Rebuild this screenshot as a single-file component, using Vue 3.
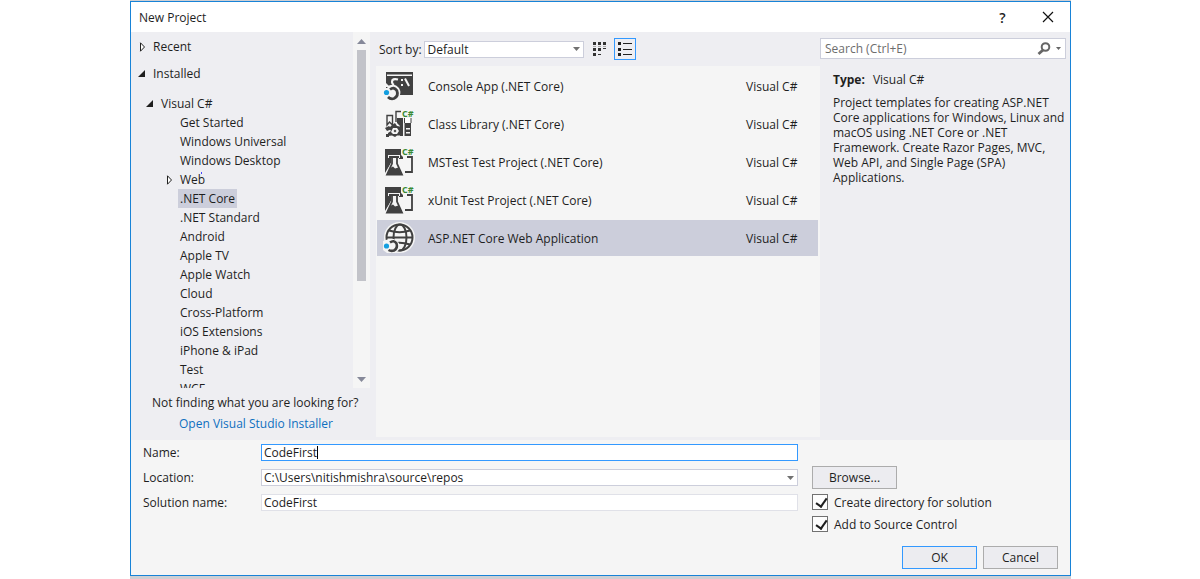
<script setup>
import { ref } from 'vue'

const languages = [
  { name: 'Get Started' },
  { name: 'Windows Universal' },
  { name: 'Windows Desktop' },
  { name: 'Web', closed: true },
  { name: '.NET Core', selected: true },
  { name: '.NET Standard' },
  { name: 'Android' },
  { name: 'Apple TV' },
  { name: 'Apple Watch' },
  { name: 'Cloud' },
  { name: 'Cross-Platform' },
  { name: 'iOS Extensions' },
  { name: 'iPhone & iPad' },
  { name: 'Test' },
  { name: 'WCF' },
]
const templates = [
  { name: 'Console App (.NET Core)', icon: 'console' },
  { name: 'Class Library (.NET Core)', icon: 'library' },
  { name: 'MSTest Test Project (.NET Core)', icon: 'test' },
  { name: 'xUnit Test Project (.NET Core)', icon: 'test' },
  { name: 'ASP.NET Core Web Application', icon: 'web' },
]
const selected = ref(4)
const name = ref('CodeFirst')
const solution = ref('CodeFirst')
const search = ref('')
const createDir = ref(true)
const sourceControl = ref(true)
</script>

<template>
  <div class="desktop">
    <main class="dialog">
      <header class="titlebar">
        <h1>New Project</h1>
        <button class="caption" aria-label="Help">?</button>
        <button class="caption" aria-label="Close">
          <svg width="12" height="12" viewBox="0 0 12 12"><path d="M1 1l10 10M11 1L1 11" stroke="#111" stroke-width="1.2" /></svg>
        </button>
      </header>

      <div class="body">
        <nav class="side">
          <div class="tree-area">
            <div class="tree">
              <div class="node top">
                <svg class="arrow" width="8" height="10" viewBox="0 0 8 10"><path d="M2.500 0.800L6.500 5L2.500 9.200Z" fill="#fff" stroke="#222" /></svg>Recent
              </div>
              <div class="node top">
                <svg class="arrow" width="8" height="10" viewBox="0 0 8 10"><path d="M7 1V8H0Z" fill="#1e1e1e" /></svg>Installed
              </div>
              <div class="node lang">
                <svg class="arrow" width="8" height="10" viewBox="0 0 8 10"><path d="M7 1V8H0Z" fill="#1e1e1e" /></svg>Visual C#
              </div>
              <div v-for="l in languages" :key="l.name" class="node leaf">
                <svg class="arrow" width="8" height="10" viewBox="0 0 8 10"><path v-if="l.closed" d="M2.500 0.800L6.500 5L2.500 9.200Z" fill="#fff" stroke="#222" /></svg>
                <span class="label" :class="{ on: l.selected, dotted: l.closed }">{{ l.name }}</span>
              </div>
            </div>
            <div class="scrollbar">
              <svg width="9" height="5" viewBox="0 0 9 5"><path d="M0 5L4.500 0L9 5Z" fill="#868999" /></svg>
              <div class="track"><div class="thumb"></div></div>
              <svg width="9" height="5" viewBox="0 0 9 5"><path d="M0 0L4.500 5L9 0Z" fill="#868999" /></svg>
            </div>
          </div>
          <p class="hint">Not finding what you are looking for?</p>
          <a class="installer" href="#">Open Visual Studio Installer</a>
        </nav>

        <section class="center">
          <div class="toolbar">
            <label for="sort">Sort by:</label>
            <div class="combo sort">
              <select id="sort"><option>Default</option></select>
              <svg width="7" height="4" viewBox="0 0 7 4"><path d="M0 0H7L3.500 4Z" fill="#717171" /></svg>
            </div>
            <button class="view" aria-label="Small icons">
              <svg width="14" height="14" viewBox="0 0 14 14" fill="#333"><path d="M0 0h3v3H0zM5 0h3v3H5zM10 0h3v3h-3zM0 6h3v3H0zM5 6h3v3H5zM10 6h3v1h-3zM0 11h3v3H0zM5 12h3v1H5z" /><path d="M0 4h3v1H0zM5 4h3v1H5zM10 4h3v1h-3z" fill="#aaa" /></svg>
            </button>
            <button class="view active" aria-label="List">
              <svg width="14" height="14" viewBox="0 0 14 14" fill="#222"><path d="M0 0h3v3H0zM0 6h3v3H0zM0 11h3v3H0zM5 1h9v1H5zM5 7h9v1H5zM5 12h9v1H5z" /></svg>
            </button>
          </div>
          <ul class="templates">
            <li v-for="(t, i) in templates" :key="t.name" :class="{ on: i === selected }" @click="selected = i">
              <svg v-if="t.icon === 'console'" class="icon" width="32" height="32" viewBox="0 0 32 32">
                <path d="M3 2H30V25H3Z" fill="#414141" />
                <path d="M4 4.500H29V6H4Z" fill="#f5f5f5" />
                <path d="M15 9.500Q9 8 9 12Q9 14 11 15" fill="none" stroke="#f5f5f5" stroke-width="2.200" />
                <path d="M18 9h2v2h-2zM18 14h2v2h-2z" fill="#f5f5f5" />
                <path d="M22 8.500L26 16" stroke="#f5f5f5" stroke-width="2" />
                <path d="M3 13L7 17H3ZM0 18H4L6 15.500Q12 13 16 18Q19 23 15.500 28L11 31H3L0 27Z" fill="#f5f5f5" />
                <path d="M7 19.500Q11 16.500 13.800 20.500Q16 26 11 28.500Q7.500 29.500 5 27" fill="none" stroke="#414141" stroke-width="2.800" />
                <circle cx="3.500" cy="22.500" r="2.600" fill="#149fe0" />
              </svg>
              <svg v-else-if="t.icon === 'library'" class="icon" width="32" height="32" viewBox="0 0 32 32">
                <path d="M4 17V7.500H9.500V17L6.500 14ZM13 14V3.500H18" fill="none" stroke="#414141" stroke-width="1.400" />
                <path d="M14 10H20V28H17V18L14 15ZM21.500 15H28V28H21.500Z" fill="#414141" />
                <path d="M21.500 10H28V15H21.500Z" fill="#fff" />
                <path d="M21.500 10V15M28 10V15" stroke="#414141" />
                <path d="M23 20H27V21.500H23ZM23 24H27V25.500H23Z" fill="#f5f5f5" />
                <path d="M9 17L12 15L14 18L17 18.500V21L19 23L17 25V27.500H14L12 29L9 27.500L5 28V25L8 23L6 20Z" fill="#414141" />
                <path d="M10 20L14 20L16 23L14 26H10L8 24Z" fill="#f5f5f5" />
                <path d="M12 21.500L13.500 23L12 24.500L10.500 23Z" fill="#414141" />
                <path d="M2 20L6 18L9 21L4 23ZM3 26H6V29H3Z" fill="#414141" />
                <text class="sharp" x="19" y="9">C#</text>
              </svg>
              <svg v-else-if="t.icon === 'test'" class="icon" width="32" height="32" viewBox="0 0 32 32">
                <path d="M2 3H18V9L20 11V13H2Z" fill="#414141" />
                <path d="M2 10H8V17L2 29Z" fill="#414141" />
                <path d="M24 11H29V26H22" fill="none" stroke="#414141" stroke-width="1.800" />
                <path d="M5 9H17V12H16V17L21.500 27V31H2V27L8 17V12H5Z" fill="#f5f5f5" />
                <path d="M6 11H16M9 11V17.500L4 28.500H19L14 17.500V11" fill="none" stroke="#414141" stroke-width="1.800" />
                <path d="M7 22L10 20.500L12 22.500L15.500 21.500L19 29H4Z" fill="#414141" />
                <text class="sharp" x="19" y="9">C#</text>
              </svg>
              <svg v-else class="icon" width="32" height="32" viewBox="0 0 32 32">
                <circle cx="16.500" cy="15.500" r="15.500" fill="#f5f5f5" />
                <g fill="none" stroke="#414141" stroke-width="2"><circle cx="16.500" cy="15.500" r="13" /><ellipse cx="17" cy="15.500" rx="6.500" ry="13" /><path d="M6 8.500Q16.500 12 27 8.500M3.500 15.500H29.500M6 22.500Q16.500 19 27 22.500" /></g>
                <path d="M0 19L6 17H11L16 21L16.500 27L13 31H4L0 28Z" fill="#f5f5f5" />
                <path d="M7 20.500Q11 17.500 13.500 21.500Q15 26.500 11 28.500Q8 29.500 5.500 28" fill="none" stroke="#414141" stroke-width="2.600" />
                <circle cx="3.500" cy="24" r="2.600" fill="#149fe0" />
              </svg>
              <span class="tname">{{ t.name }}</span>
              <span class="tlang">Visual C#</span>
            </li>
          </ul>
        </section>

        <aside class="details">
          <div class="search">
            <input v-model="search" aria-label="Search" placeholder="Search (Ctrl+E)" />
            <svg width="14" height="14" viewBox="0 0 14 14"><circle cx="8.500" cy="5" r="3.800" fill="none" stroke="#666" stroke-width="2" /><path d="M6 8L1.500 12" stroke="#666" stroke-width="2.800" /></svg>
            <svg width="5" height="3" viewBox="0 0 5 3"><path d="M0 0H5L2.500 3Z" fill="#666" /></svg>
          </div>
          <div class="info">
            <p><b>Type:</b>Visual C#</p>
            <p>Project templates for creating ASP.NET Core applications for Windows, Linux and macOS using .NET Core or .NET Framework. Create Razor Pages, MVC, Web API, and Single Page (SPA) Applications.</p>
          </div>
        </aside>
      </div>

      <form class="bottom" @submit.prevent>
        <div class="fields">
          <label for="name">Name:</label>
          <div class="field focus"><input id="name" v-model="name" class="grow" /><i class="caret"></i></div>
          <label for="location">Location:</label>
          <div class="combo">
            <select id="location"><option>C:\Users\nitishmishra\source\repos</option></select>
            <svg width="7" height="4" viewBox="0 0 7 4"><path d="M0 0H7L3.500 4Z" fill="#717171" /></svg>
          </div>
          <label for="solution">Solution name:</label>
          <div class="field quiet"><input id="solution" v-model="solution" /></div>
        </div>
        <div class="options">
          <button type="button" class="btn browse">Browse...</button>
          <label class="check"><input v-model="createDir" type="checkbox" />Create directory for solution</label>
          <label class="check"><input v-model="sourceControl" type="checkbox" />Add to Source Control</label>
          <div class="actions">
            <button class="btn primary">OK</button>
            <button type="button" class="btn">Cancel</button>
          </div>
        </div>
      </form>
    </main>
  </div>
</template>

<style>
body { background: #fff; }
</style>

<style scoped>
.desktop, .desktop * { box-sizing: border-box; }
.desktop {
  margin: 0 129px 0 130px;
  padding: 1px 0 3px;
  background: #cfcfd3;
  color: #1e1e1e;
  font: 12px/15px "Open Sans", "Noto Sans", sans-serif;
}
input, select, button { font: inherit; color: inherit; margin: 0; border: 0; background: none; padding: 0; outline: 0; }
svg { flex: none; }
p, h1, ul { margin: 0; padding: 0; }
.dialog { border: 1px solid #1883d7; background: #f5f5f5; }
.titlebar { display: flex; align-items: center; height: 30px; padding: 0 0 0 8px; background: #fff; }
h1 { flex: 1; font-size: 12px; font-weight: 400; }
.caption { width: 45px; height: 30px; display: flex; align-items: center; justify-content: center; font-size: 14px; font-weight: 600; }
.body { display: grid; grid-template-columns: 239px minmax(0, 1fr) 250px; height: 408px; background: #eeeef2; }

.tree-area { display: flex; height: 356px; overflow: hidden; }
.tree { flex: 1; padding-top: 1px; }
.node { display: flex; align-items: center; height: 19px; }
.arrow { margin-right: 7px; }
.top { height: 27px; padding-left: 7px; }
.lang { height: 19px; margin-top: 7px; padding-left: 15px; }
.leaf { padding-left: 34px; }
.leaf .arrow { margin-right: 5px; }
.label { position: relative; height: 19px; padding: 0 2px; line-height: 19px; }
.label.on { background: #cccedb; }
.dotted::after { content: ""; position: absolute; top: 2px; right: 5px; width: 1px; height: 2px; background: #4646ff; }
.scrollbar { display: flex; flex-direction: column; align-items: center; width: 17px; padding: 7px 0 6px; background: #f5f5f5; }
.track { flex: 1; width: 9px; padding: 6px 0; }
.thumb { height: 72%; background: #c2c3c9; }
.hint { padding: 7px 0 0 21px; }
.installer { display: block; margin: 6px 0 0 48px; color: #0e70c0; text-decoration: none; }

.center { padding-left: 6px; display: flex; flex-direction: column; }
.toolbar { display: flex; align-items: center; height: 34px; padding-left: 3px; }
.combo, .field { display: flex; align-items: center; height: 17px; border: 1px solid #cccedb; background: #fff; }
.combo select { flex: 1; min-width: 0; height: 15px; appearance: none; padding-left: 2px; line-height: 15px; }
.combo { padding-right: 3px; }
.sort { width: 160px; margin: 0 5px 0 2px; }
.sort select { padding-left: 3px; }
.view { flex: none; display: flex; align-items: center; justify-content: center; width: 22px; height: 22px; }
.active { margin-left: 3px; border: 1px solid #3399ff; }
.templates { flex: 1; margin-bottom: 3px; padding: 2px 2px 0 1px; background: #f5f5f5; list-style: none; }
li { display: flex; align-items: center; height: 36px; margin-bottom: 2px; padding-left: 6px; }
li.on { background: #cccedb; }
.icon { margin-right: 13px; overflow: visible; }
.sharp { font: 700 9px "Open Sans", sans-serif; fill: #388a34; }
.tname { flex: 1; }
.tlang { width: 72px; }

.search { display: flex; align-items: center; gap: 5px; height: 21px; margin: 6px 4px 0 0; padding: 0 4px; border: 1px solid #cccedb; background: #fff; }
.search input { flex: 1; min-width: 0; }
.search input::placeholder { color: #6d6d6d; opacity: 1; }
.info { padding: 13px 4px 0 13px; }
.info p { margin-bottom: 8px; }
.info b { margin-right: 8px; }

.bottom { display: flex; gap: 14px; padding: 4px 12px 6px; }
.fields { flex: 1; display: grid; grid-template-columns: 118px minmax(0, 1fr); gap: 8px 0; align-content: start; align-items: center; }
.field input { width: 100%; padding-left: 2px; line-height: 15px; height: 15px; }
.field .grow { width: auto; field-sizing: content; }
.field.focus { border-color: #3399ff; }
.field.quiet { border-color: #e0e1e8; }
.caret { width: 1px; height: 13px; background: #000; }
.options { width: 246px; padding-top: 22px; }
.btn { width: 75px; height: 23px; border: 1px solid #acacac; background: #ececf0; }
.browse { display: block; width: 85px; margin-bottom: 5px; }
.primary { border-color: #3399ff; }
.check { display: flex; align-items: center; gap: 6px; height: 16px; margin-bottom: 6px; }
.check input { appearance: none; position: relative; width: 16px; height: 16px; border: 1px solid #717171; background: #fdfdfd; }
.check input:checked::after { content: ""; position: absolute; left: 5px; top: 1px; width: 5px; height: 9px; border: solid #1e1e1e; border-width: 0 2px 2px 0; transform: rotate(35deg); }
.actions { display: flex; justify-content: flex-end; gap: 6px; margin-top: 14px; }
</style>
